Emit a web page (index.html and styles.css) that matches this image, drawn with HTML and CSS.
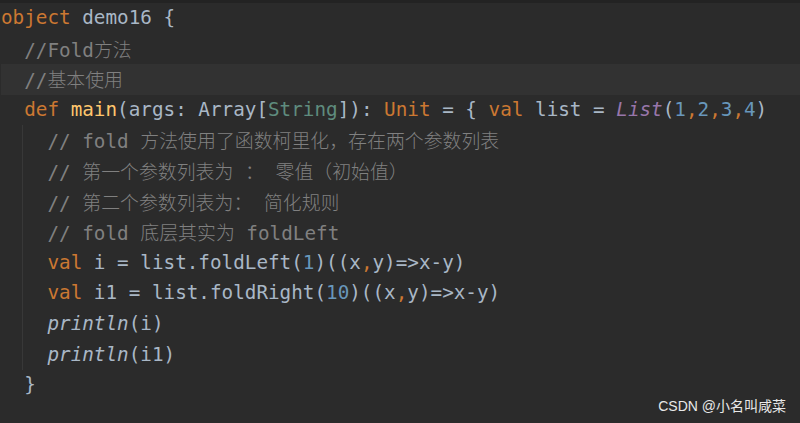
FILE: index.html
```html
<!DOCTYPE html>
<html lang="zh">
<head>
<meta charset="utf-8">
<title>demo16</title>
<link rel="stylesheet" href="styles.css">
</head>
<body>
<div class="topbar"></div>
<div class="editor">
  <div class="line"><span class="kw">object</span> demo16 {</div>
  <div class="line">  <span class="cm">//Fold<span class="c">方法</span></span></div>
  <div class="line current">  <span class="cm">//<span class="c">基本使用</span></span></div>
  <div class="line">  <span class="kw">def</span> <span class="fn">main</span>(args: Array[<span class="ty">String</span>]): <span class="kw">Unit</span> = { <span class="kw">val</span> list = <span class="obj">List</span>(<span class="num">1</span><span class="kw">,</span><span class="num">2</span><span class="kw">,</span><span class="num">3</span><span class="kw">,</span><span class="num">4</span>)</div>
  <div class="block">
    <div class="line">    <span class="cm">// fold <span class="c">方法使用了函数柯里化，存在两个参数列表</span></span></div>
    <div class="line">    <span class="cm">// <span class="c">第一个参数列表为</span> <span class="c">：</span> <span class="c">零值（初始值）</span></span></div>
    <div class="line">    <span class="cm">// <span class="c">第二个参数列表为：</span> <span class="c">简化规则</span></span></div>
    <div class="line">    <span class="cm">// fold <span class="c">底层其实为</span> foldLeft</span></div>
    <div class="line">    <span class="kw">val</span> i = list.foldLeft(<span class="num">1</span>)((x<span class="kw">,</span>y)=&gt;x-y)</div>
    <div class="line">    <span class="kw">val</span> i1 = list.foldRight(<span class="num">10</span>)((x<span class="kw">,</span>y)=&gt;x-y)</div>
    <div class="line">    <span class="it">println</span>(i)</div>
    <div class="line">    <span class="it">println</span>(i1)</div>
  </div>
  <div class="line">  }</div>
</div>
<div class="watermark">CSDN @小名叫咸菜</div>
</body>
</html>
```

FILE: styles.css
```css
html, body {
  margin: 0;
  padding: 0;
  background: #2b2b2b;
  width: 800px;
  height: 423px;
  overflow: hidden;
}

.topbar {
  height: 3px;
  background: #232323;
}

.editor {
  padding-left: 1px;
  font-family: "DejaVu Sans Mono", "Noto Sans CJK SC", monospace;
  font-size: 19.3px;
  color: #a9b7c6;
}

.line {
  height: 30.6px;
  line-height: 30.6px;
  white-space: pre;
}

.current {
  background: #323232;
}

.block {
  background: linear-gradient(#383838, #383838) no-repeat 21px 0 / 1px 100%;
}

.kw { color: #cc7832; }
.cm { color: #808080; }
.fn { color: #ffc66d; }
.num { color: #6897bb; }
.ty { color: #5f8c7e; }
.obj { color: #9876aa; font-style: italic; }
.it { font-style: italic; color: #a9b7c6; }

.c {
  font-family: "Noto Sans CJK SC", sans-serif;
  font-size: 18.9px;
  font-weight: 300;
}

.watermark {
  position: absolute;
  right: 14px;
  bottom: 8px;
  font-family: "Liberation Sans", "Noto Sans CJK SC", sans-serif;
  font-size: 14px;
  color: #e8e8e8;
}
```
